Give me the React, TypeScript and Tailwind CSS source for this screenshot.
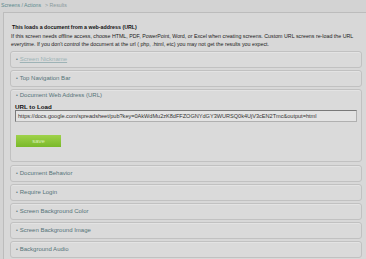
const SECTIONS_AFTER = [
  "Document Behavior",
  "Require Login",
  "Screen Background Color",
  "Screen Background Image",
  "Background Audio",
];

function SectionBar({ label, muted }: { label: string; muted?: boolean }) {
  return (
    <div className="h-[17px] flex items-center px-[5px] rounded-[3px] border border-[#c1c1c1] bg-[#dadada] shadow-[inset_0_1px_0_#e3e3e3]">
      <span className="text-[#5b7c80] text-[5px] mr-[2px]">•</span>
      <span className={muted ? "text-[#9db3b6] underline text-[6px]" : "text-[#557378] text-[6px]"}>{label}</span>
    </div>
  );
}

export default function App() {
  return (
    <div className="w-[366px] h-[259px] overflow-hidden bg-[#d3d3d3] font-['Liberation_Sans',Arial,sans-serif]">
      {/* breadcrumb */}
      <div className="h-[12px] flex items-center pl-[1px] text-[5.2px] leading-none">
        <span className="text-[#5b8a8e]">Screens / Actions</span>
        <span className="text-[#8a9a9c] ml-[4px]">&gt; Results</span>
      </div>

      <div className="ml-[3px] h-[247px] border-l border-t border-[#bcbcbc] bg-[#d8d8d8] pl-[6px] pr-[4px] pt-[10px]">
        <h1 className="text-[5.3px] font-bold text-[#111] leading-[8px] pl-[2px]">
          This loads a document from a web-address (URL)
        </h1>
        <p className="mt-[2px] text-[5.3px] leading-[7.5px] text-[#222] pl-[1px]">
          If this screen needs offline access, choose HTML, PDF, PowerPoint, Word, or Excel when creating screens. Custom URL screens re-load the URL
          everytime. If you don't control the document at the url ( php, .html, etc) you may not get the results you expect.
        </p>

        <div className="mt-[3px] flex flex-col gap-[2px]">
          <SectionBar label="Screen Nickname" muted />
          <SectionBar label="Top Navigation Bar" />

          <div className="h-[73px] rounded-[3px] border border-[#c1c1c1] bg-[#dadada] shadow-[inset_0_1px_0_#e3e3e3] px-[4px] pt-[2px]">
            <div className="flex items-center px-[1px] h-[7px]">
              <span className="text-[#5b7c80] text-[5px] mr-[2px]">•</span>
              <span className="text-[#557378] text-[6px]">Document Web Address (URL)</span>
            </div>
            <div className="mt-[5px] text-[6.2px] font-bold text-[#111] leading-[6px]">URL to Load</div>
            <div className="h-[12px] flex items-center pl-[2px] border border-[#7a7a7a] border-b-[#b0b0b0] border-r-[#b0b0b0] bg-[#e3e3e3] text-[5.6px] tracking-[-0.02px] text-[#333] whitespace-nowrap overflow-hidden">
              https://docs.google.com/spreadsheet/pub?key=0AkWdMu2zK8dFFZOGNYdGY3WURSQ0k4UjV3cEN2Tmc&amp;output=html
            </div>
            <button className="mt-[13px] ml-[1px] w-[45px] h-[12px] flex items-center justify-center bg-[linear-gradient(#9fd24a,#79b92a)] text-[#d8efb8] text-[6px]">
              save
            </button>
          </div>

          <div className="mt-[1px] flex flex-col gap-[2px]">
            {SECTIONS_AFTER.map((s) => (
              <SectionBar key={s} label={s} />
            ))}
          </div>
        </div>
      </div>
    </div>
  );
}
